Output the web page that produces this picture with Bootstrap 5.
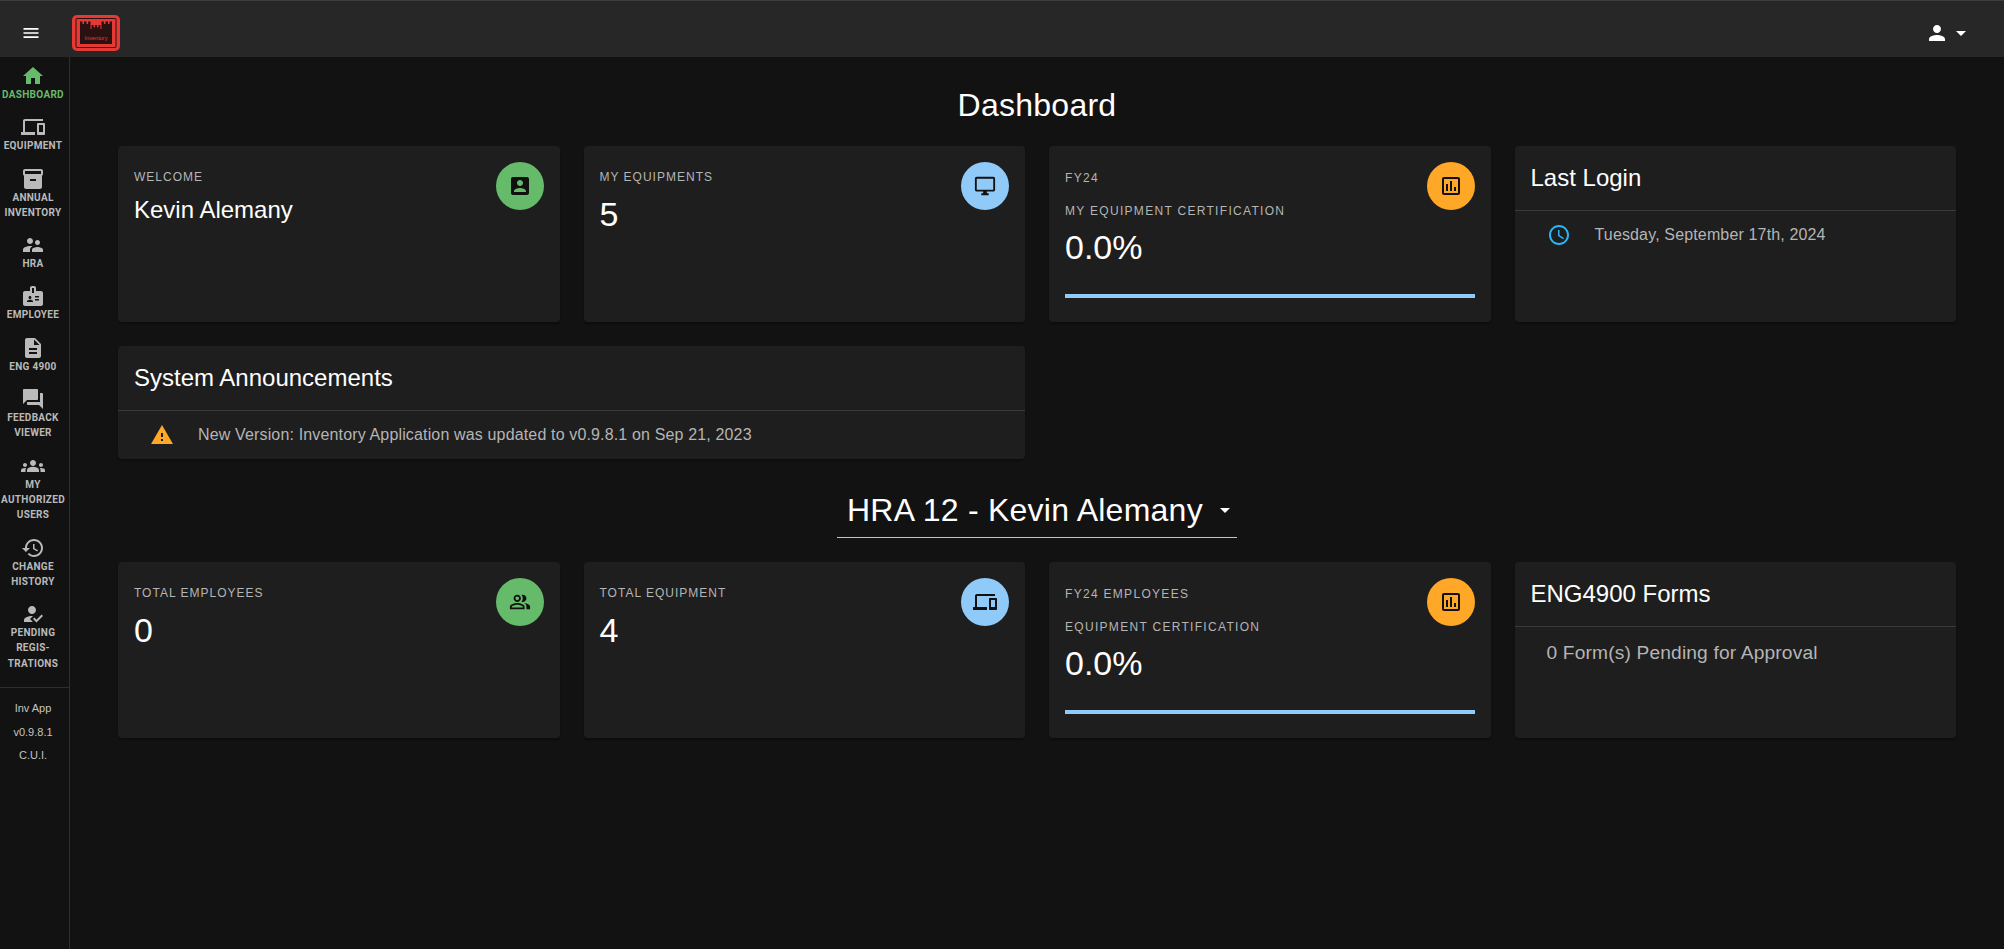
<!DOCTYPE html>
<html lang="en">
  <head>
    <meta charset="UTF-8" />
    <meta name="viewport" content="width=device-width, initial-scale=1.0" />
    <title>Inventory Dashboard</title>
    <link
      href="https://cdn.jsdelivr.net/npm/bootstrap@5.3.0/dist/css/bootstrap.min.css"
      rel="stylesheet"
    />
    <style>
      body {
        font-family: "Liberation Sans", Arial, sans-serif;
        background-color: #121212;
        color: #fff;
        min-height: 949px;
      }
      .top-bar {
        height: 57px;
        background-color: #272727;
        border-top: 1px solid #3c3c3c;
        padding: 8px 31px 0 21px;
      }
      .top-bar svg {
        display: block;
      }
      .logo-box {
        margin-left: 31px;
      }
      .page-wrap {
        min-height: 892px;
      }
      .side-nav {
        width: 70px;
        flex: 0 0 70px;
        border-right: 1px solid #2e2e2e;
        color: #bababa;
      }
      .side-item {
        padding: 7px 3px 6px 0;
        text-align: center;
        font-family: Roboto, sans-serif;
        font-size: 10px;
        font-weight: 700;
        line-height: 15.3px;
        letter-spacing: 0.3px;
        white-space: nowrap;
      }
      .side-item svg {
        display: block;
        margin: 0 auto -1px;
      }
      .side-item.is-active {
        color: #66bb6a;
      }
      .side-foot {
        margin-top: 10px;
        padding: 9px 3px 0 0;
        border-top: 1px solid #2e2e2e;
        text-align: center;
        font-size: 11px;
        line-height: 23.5px;
        color: #c4c4c4;
      }
      .main-area {
        padding: 0 48px;
        min-width: 0;
      }
      .page-title {
        font-size: 32px;
        font-weight: 400;
        line-height: 42px;
        letter-spacing: 0.25px;
        text-align: center;
        margin: 27px 0 20px;
      }
      .panel {
        background-color: #1e1e1e;
        border: 0;
        border-radius: 4px;
        color: #fff;
        box-shadow: 0 2px 2px rgba(0, 0, 0, 0.25);
      }
      .stat-panel {
        height: 176px;
      }
      .over-label {
        font-size: 12px;
        line-height: 30px;
        margin-bottom: 1px;
        letter-spacing: 1px;
        color: #b5b5b5;
        text-transform: uppercase;
      }
      .over-label.is-wide {
        line-height: 32px;
        margin-bottom: 0;
        letter-spacing: 1.3px;
      }
      .over-label.is-wide + .over-label.is-wide {
        position: relative;
        top: 1px;
      }
      .stat-name {
        font-size: 24px;
        line-height: 32px;
        padding-top: 1px;
      }
      .stat-num {
        font-size: 34px;
        line-height: 42px;
      }
      .round-icon {
        width: 48px;
        height: 48px;
        border-radius: 50%;
        color: #111;
        flex: 0 0 48px;
      }
      .bg-green {
        background-color: #66bb6a;
      }
      .bg-sky {
        background-color: #90caf9;
      }
      .bg-amber {
        background-color: #ffa726;
      }
      .thin-bar {
        height: 4px;
        margin-top: 26px;
        border-radius: 0;
        background-color: #90caf9;
      }
      .thin-bar .progress-bar {
        background-color: #90caf9;
      }
      .panel-head {
        height: 65px;
        padding: 16px;
        font-size: 24px;
        line-height: 32px;
        border-bottom: 1px solid #3a3a3a;
      }
      .panel-row {
        height: 48px;
        padding: 0 16px 0 32px;
        font-size: 16px;
        letter-spacing: 0.15px;
        color: #b5b5b5;
      }
      .row-icon {
        width: 48px;
        flex: 0 0 48px;
      }
      .clock-blue {
        color: #29b6f6;
      }
      .warn-amber {
        color: #ffa726;
      }
      .pending-text {
        padding: 14px 32px;
        font-size: 19.2px;
        line-height: 24px;
        letter-spacing: 0.15px;
        color: #b5b5b5;
      }
      .hra-select {
        width: 400px;
        height: 55px;
        margin: 24px auto;
        padding: 0 0 0 10px;
        font-size: 32px;
        line-height: 42px;
        letter-spacing: 0.25px;
        border-bottom: 1px solid #c4c4c4;
      }
    </style>
  </head>
  <body>
    <svg width="0" height="0" class="position-absolute">
      <defs>
        <symbol id="i-menu" viewBox="0 0 24 24"><path d="M3 18h18v-2H3v2zm0-5h18v-2H3v2zm0-7v2h18V6H3z" /></symbol>
        <symbol id="i-home" viewBox="0 0 24 24"><path d="M10 20v-6h4v6h5v-8h3L12 3 2 12h3v8z" /></symbol>
        <symbol id="i-devices" viewBox="0 0 24 24"><path d="M4 6h18V4H4c-1.1 0-2 .9-2 2v11H0v3h14v-3H4V6zm19 2h-6c-.55 0-1 .45-1 1v10c0 .55.45 1 1 1h6c.55 0 1-.45 1-1V9c0-.55-.45-1-1-1zm-1 9h-4v-7h4v7z" /></symbol>
        <symbol id="i-archive" viewBox="0 0 24 24"><path d="M20 2H4c-1 0-2 .9-2 2v3.01c0 .72.43 1.34 1 1.69V20c0 1.1 1.1 2 2 2h14c.9 0 2-.9 2-2V8.7c.57-.35 1-.97 1-1.69V4c0-1.1-1-2-2-2zm-5 12H9v-2h6v2zm5-7H4V4l16-.02V7z" /></symbol>
        <symbol id="i-super" viewBox="0 0 24 24"><path d="M16.5 12c1.38 0 2.49-1.12 2.49-2.5S17.88 7 16.5 7C15.12 7 14 8.12 14 9.5s1.12 2.5 2.5 2.5zM9 11c1.66 0 2.99-1.34 2.99-3S10.66 5 9 5C7.34 5 6 6.34 6 8s1.34 3 3 3zm7.5 3c-1.83 0-5.5.92-5.5 2.75V19h11v-2.25c0-1.83-3.67-2.75-5.5-2.75zM9 13c-2.33 0-7 1.17-7 3.5V19h7v-2.25c0-.85.33-2.34 2.37-3.47C10.5 13.1 9.66 13 9 13z" /></symbol>
        <symbol id="i-badge" viewBox="0 0 24 24"><path d="M20 7h-5V4c0-1.1-.9-2-2-2h-2c-1.1 0-2 .9-2 2v3H4c-1.1 0-2 .9-2 2v11c0 1.1.9 2 2 2h16c1.1 0 2-.9 2-2V9c0-1.1-.9-2-2-2zM9 12c.83 0 1.5.67 1.5 1.5S9.83 15 9 15s-1.5-.67-1.5-1.5S8.17 12 9 12zm3 6H6v-.75c0-1 2-1.5 3-1.5s3 .5 3 1.5V18zm1-9h-2V4h2v5zm5 7.5h-4V15h4v1.5zm0-3h-4V12h4v1.5z" /></symbol>
        <symbol id="i-desc" viewBox="0 0 24 24"><path d="M14 2H6c-1.1 0-1.99.9-1.99 2L4 20c0 1.1.89 2 1.99 2H18c1.1 0 2-.9 2-2V8l-6-6zm2 16H8v-2h8v2zm0-4H8v-2h8v2zm-3-5V3.5L18.5 9H13z" /></symbol>
        <symbol id="i-forum" viewBox="0 0 24 24"><path d="M21 6h-2v9H6v2c0 .55.45 1 1 1h11l4 4V7c0-.55-.45-1-1-1zm-4 6V3c0-.55-.45-1-1-1H3c-.55 0-1 .45-1 1v14l4-4h10c.55 0 1-.45 1-1z" /></symbol>
        <symbol id="i-groups" viewBox="0 0 24 24"><path d="M12 12.75c1.63 0 3.07.39 4.24.9 1.08.48 1.76 1.56 1.76 2.73V18H6v-1.61c0-1.18.68-2.26 1.76-2.73 1.17-.52 2.61-.91 4.24-.91zM4 13c1.1 0 2-.9 2-2s-.9-2-2-2-2 .9-2 2 .9 2 2 2zm1.13 1.1c-.37-.06-.74-.1-1.13-.1-.99 0-1.93.21-2.78.58C.48 14.9 0 15.62 0 16.43V18h4.5v-1.61c0-.83.23-1.61.63-2.29zM20 13c1.1 0 2-.9 2-2s-.9-2-2-2-2 .9-2 2 .9 2 2 2zm4 3.43c0-.81-.48-1.53-1.22-1.85-.85-.37-1.79-.58-2.78-.58-.39 0-.76.04-1.13.1.4.68.63 1.46.63 2.29V18H24v-1.57zM12 6c1.66 0 3 1.34 3 3s-1.34 3-3 3-3-1.34-3-3 1.34-3 3-3z" /></symbol>
        <symbol id="i-history" viewBox="0 0 24 24"><path d="M13 3c-4.97 0-9 4.03-9 9H1l3.89 3.89.07.14L9 12H6c0-3.87 3.13-7 7-7s7 3.13 7 7-3.13 7-7 7c-1.93 0-3.68-.79-4.94-2.06l-1.42 1.42C8.27 19.99 10.51 21 13 21c4.97 0 9-4.03 9-9s-4.03-9-9-9zm-1 5v5l4.28 2.54.72-1.21-3.5-2.08V8H12z" /></symbol>
        <symbol id="i-reg" viewBox="0 0 24 24"><path d="M9 17l3-2.94c-.39-.04-.68-.06-1-.06-2.67 0-8 1.34-8 4v2h9l-3-3zm2-5c2.21 0 4-1.79 4-4s-1.79-4-4-4-4 1.79-4 4 1.79 4 4 4m4.47 8.5L12 17l1.4-1.41 2.07 2.08 5.13-5.17 1.4 1.41z" /></symbol>
        <symbol id="i-acct" viewBox="0 0 24 24"><path d="M3 5v14c0 1.1.89 2 2 2h14c1.1 0 2-.9 2-2V5c0-1.1-.9-2-2-2H5c-1.11 0-2 .9-2 2zm12 4c0 1.66-1.34 3-3 3s-3-1.34-3-3 1.34-3 3-3 3 1.34 3 3zm-9 8c0-2 4-3.1 6-3.1s6 1.1 6 3.1v1H6v-1z" /></symbol>
        <symbol id="i-desktop" viewBox="0 0 24 24"><path d="M21 2H3c-1.1 0-2 .9-2 2v12c0 1.1.9 2 2 2h7v2H8v2h8v-2h-2v-2h7c1.1 0 2-.9 2-2V4c0-1.1-.9-2-2-2zm0 14H3V4h18v12z" /></symbol>
        <symbol id="i-chart" viewBox="0 0 24 24"><path d="M9 17H7v-7h2v7zm4 0h-2V7h2v10zm4 0h-2v-4h2v4zm2 2H5V5h14v14zm0-16H5c-1.1 0-2 .9-2 2v14c0 1.1.9 2 2 2h14c1.1 0 2-.9 2-2V5c0-1.1-.9-2-2-2z" /></symbol>
        <symbol id="i-people" viewBox="0 0 24 24"><path d="M16.67 13.13C18.04 14.06 19 15.32 19 17v3h4v-3c0-2.18-3.57-3.47-6.33-3.87zM15 12c2.21 0 4-1.79 4-4s-1.79-4-4-4c-.47 0-.91.1-1.33.24C14.5 5.27 15 6.58 15 8s-.5 2.73-1.33 3.76c.42.14.86.24 1.33.24zM9 12c2.21 0 4-1.79 4-4s-1.79-4-4-4-4 1.79-4 4 1.79 4 4 4zm0-6c1.1 0 2 .9 2 2s-.9 2-2 2-2-.9-2-2 .9-2 2-2zm0 7c-2.67 0-8 1.34-8 4v3h16v-3c0-2.66-5.33-4-8-4zm6 5H3v-.99C3.2 16.29 6.3 15 9 15s5.8 1.29 6 2v1z" /></symbol>
        <symbol id="i-clock" viewBox="0 0 24 24"><path d="M11.99 2C6.47 2 2 6.48 2 12s4.47 10 9.99 10C17.52 22 22 17.52 22 12S17.52 2 11.99 2zM12 20c-4.42 0-8-3.58-8-8s3.58-8 8-8 8 3.58 8 8-3.58 8-8 8zm.5-13H11v6l5.25 3.15.75-1.23-4.5-2.67z" /></symbol>
        <symbol id="i-warn" viewBox="0 0 24 24"><path d="M1 21h22L12 2 1 21zm12-3h-2v-2h2v2zm0-4h-2v-4h2v4z" /></symbol>
        <symbol id="i-person" viewBox="0 0 24 24"><path d="M12 12c2.21 0 4-1.79 4-4s-1.79-4-4-4-4 1.79-4 4 1.79 4 4 4zm0 2c-2.67 0-8 1.34-8 4v2h16v-2c0-2.66-5.33-4-8-4z" /></symbol>
        <symbol id="i-caret" viewBox="0 0 24 24"><path d="M7 10l5 5 5-5z" /></symbol>
      </defs>
    </svg>

    <nav class="navbar top-bar flex-nowrap justify-content-between align-items-center">
      <div class="d-flex align-items-center">
        <svg width="20" height="20" fill="#fff"><use href="#i-menu" /></svg>
        <svg class="logo-box" width="48" height="36" viewBox="0 0 48 36">
          <rect width="48" height="36" rx="5" fill="#e53935" />
          <rect x="4" y="3.5" width="40" height="29" rx="1" fill="none" stroke="#2a1212" stroke-width="1" />
          <path fill="#2a1212" d="M8 29V6.5h2.4V9H12V6.5h2.5V9h1.6V6.5h2.4V14h1V10h2.1v2.2H23V10h2v2.2h1.4V10h2.1v4h1V6.5h2.4V9h1.6V6.5H36V9h1.6V6.5H40V29z" />
          <text x="24" y="24.5" text-anchor="middle" font-family="Liberation Sans, sans-serif" font-size="5.6" fill="#e53935">Inventory</text>
        </svg>
      </div>
      <div class="d-flex align-items-center">
        <svg width="24" height="24" fill="#fff"><use href="#i-person" /></svg>
        <svg width="24" height="24" fill="#fff"><use href="#i-caret" /></svg>
      </div>
    </nav>

    <div class="d-flex page-wrap">
      <aside class="side-nav">
        <div class="side-item is-active"><svg width="24" height="24" fill="currentColor"><use href="#i-home" /></svg>DASHBOARD</div>
        <div class="side-item"><svg width="24" height="24" fill="currentColor"><use href="#i-devices" /></svg>EQUIPMENT</div>
        <div class="side-item"><svg width="24" height="24" fill="currentColor"><use href="#i-archive" /></svg>ANNUAL<br />INVENTORY</div>
        <div class="side-item"><svg width="24" height="24" fill="currentColor"><use href="#i-super" /></svg>HRA</div>
        <div class="side-item"><svg width="24" height="24" fill="currentColor"><use href="#i-badge" /></svg>EMPLOYEE</div>
        <div class="side-item"><svg width="24" height="24" fill="currentColor"><use href="#i-desc" /></svg>ENG 4900</div>
        <div class="side-item"><svg width="24" height="24" fill="currentColor"><use href="#i-forum" /></svg>FEEDBACK<br />VIEWER</div>
        <div class="side-item"><svg width="24" height="24" fill="currentColor"><use href="#i-groups" /></svg>MY<br />AUTHORIZED<br />USERS</div>
        <div class="side-item"><svg width="24" height="24" fill="currentColor"><use href="#i-history" /></svg>CHANGE<br />HISTORY</div>
        <div class="side-item"><svg width="24" height="24" fill="currentColor"><use href="#i-reg" /></svg>PENDING<br />REGIS-<br />TRATIONS</div>
        <div class="side-foot">
          <div>Inv App</div>
          <div>v0.9.8.1</div>
          <div>C.U.I.</div>
        </div>
      </aside>

      <main class="main-area flex-grow-1">
        <h1 class="page-title">Dashboard</h1>

        <div class="row g-4">
          <div class="col-3">
            <div class="card panel stat-panel p-3">
              <div class="d-flex justify-content-between">
                <div>
                  <div class="over-label">Welcome</div>
                  <div class="stat-name">Kevin Alemany</div>
                </div>
                <div class="round-icon bg-green d-flex align-items-center justify-content-center">
                  <svg width="24" height="24" fill="currentColor"><use href="#i-acct" /></svg>
                </div>
              </div>
            </div>
          </div>
          <div class="col-3">
            <div class="card panel stat-panel p-3">
              <div class="d-flex justify-content-between">
                <div>
                  <div class="over-label">My Equipments</div>
                  <div class="stat-num">5</div>
                </div>
                <div class="round-icon bg-sky d-flex align-items-center justify-content-center">
                  <svg width="22" height="22" fill="currentColor"><use href="#i-desktop" /></svg>
                </div>
              </div>
            </div>
          </div>
          <div class="col-3">
            <div class="card panel stat-panel p-3">
              <div class="d-flex justify-content-between">
                <div>
                  <div class="over-label is-wide">FY24</div>
                  <div class="over-label is-wide">My Equipment Certification</div>
                  <div class="stat-num">0.0%</div>
                </div>
                <div class="round-icon bg-amber d-flex align-items-center justify-content-center">
                  <svg width="24" height="24" fill="currentColor"><use href="#i-chart" /></svg>
                </div>
              </div>
              <div class="progress thin-bar"><div class="progress-bar w-100"></div></div>
            </div>
          </div>
          <div class="col-3">
            <div class="card panel stat-panel">
              <div class="panel-head">Last Login</div>
              <div class="panel-row d-flex align-items-center">
                <div class="row-icon clock-blue d-flex align-items-center">
                  <svg width="24" height="24" fill="currentColor"><use href="#i-clock" /></svg>
                </div>
                <span>Tuesday, September 17th, 2024</span>
              </div>
            </div>
          </div>
          <div class="col-6">
            <div class="card panel">
              <div class="panel-head">System Announcements</div>
              <div class="panel-row d-flex align-items-center">
                <div class="row-icon warn-amber d-flex align-items-center">
                  <svg width="24" height="24" fill="currentColor"><use href="#i-warn" /></svg>
                </div>
                <span>New Version: Inventory Application was updated to v0.9.8.1 on Sep 21, 2023</span>
              </div>
            </div>
          </div>
        </div>

        <div class="hra-select d-flex justify-content-between align-items-center">
          <span>HRA 12 - Kevin Alemany</span>
          <svg width="24" height="24" fill="#fff"><use href="#i-caret" /></svg>
        </div>

        <div class="row g-4">
          <div class="col-3">
            <div class="card panel stat-panel p-3">
              <div class="d-flex justify-content-between">
                <div>
                  <div class="over-label">Total Employees</div>
                  <div class="stat-num">0</div>
                </div>
                <div class="round-icon bg-green d-flex align-items-center justify-content-center">
                  <svg width="22" height="22" fill="currentColor"><use href="#i-people" /></svg>
                </div>
              </div>
            </div>
          </div>
          <div class="col-3">
            <div class="card panel stat-panel p-3">
              <div class="d-flex justify-content-between">
                <div>
                  <div class="over-label">Total Equipment</div>
                  <div class="stat-num">4</div>
                </div>
                <div class="round-icon bg-sky d-flex align-items-center justify-content-center">
                  <svg width="24" height="24" fill="currentColor"><use href="#i-devices" /></svg>
                </div>
              </div>
            </div>
          </div>
          <div class="col-3">
            <div class="card panel stat-panel p-3">
              <div class="d-flex justify-content-between">
                <div>
                  <div class="over-label is-wide">FY24 Employees</div>
                  <div class="over-label is-wide">Equipment Certification</div>
                  <div class="stat-num">0.0%</div>
                </div>
                <div class="round-icon bg-amber d-flex align-items-center justify-content-center">
                  <svg width="24" height="24" fill="currentColor"><use href="#i-chart" /></svg>
                </div>
              </div>
              <div class="progress thin-bar"><div class="progress-bar w-100"></div></div>
            </div>
          </div>
          <div class="col-3">
            <div class="card panel stat-panel">
              <div class="panel-head">ENG4900 Forms</div>
              <div class="pending-text">0 Form(s) Pending for Approval</div>
            </div>
          </div>
        </div>
      </main>
    </div>

    <script src="https://cdn.jsdelivr.net/npm/bootstrap@5.3.0/dist/js/bootstrap.bundle.min.js"></script>
  </body>
</html>
